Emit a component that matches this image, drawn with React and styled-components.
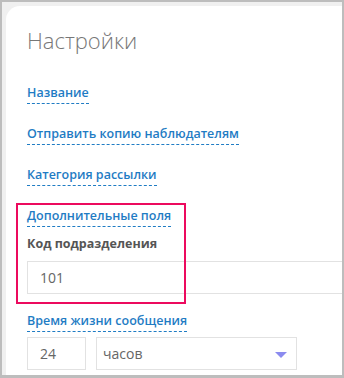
import styled, { createGlobalStyle } from 'styled-components';

const Global = createGlobalStyle`
  html, body {
    margin: 0;
    padding: 0;
    background: #bdbdbd;
  }
  body {
    font-family: 'Open Sans', 'Noto Sans', sans-serif;
  }
`;

const Frame = styled.div`
  margin: 2px 2px 0 2px;
  height: 373px;
  background: #f0f0f0;
  padding: 4px 0 0 4px;
  box-sizing: border-box;
  display: flex;
`;

const Panel = styled.div`
  position: relative;
  flex: 1;
  background: #fff;
  border-top-left-radius: 14px;
  padding: 18px 0 0 21px;
  overflow: hidden;
`;

const Title = styled.h1`
  margin: 0 0 29px;
  font-size: 22px;
  line-height: 32px;
  font-weight: 300;
  color: #777;
`;

const Section = styled.div`
  display: flex;
  flex-direction: column;
  align-items: flex-start;
  margin-bottom: ${(p) => p.$gap ?? 22}px;
`;

const Link = styled.a`
  display: block;
  font-size: 12.5px;
  line-height: 16px;
  font-weight: 600;
  color: #1f7cc4;
  text-decoration: none;
  border-bottom: 1px dashed #1f7cc4;
  padding-bottom: 2px;
  cursor: pointer;
`;

const Label = styled.div`
  font-size: 12.5px;
  line-height: 16px;
  font-weight: 700;
  color: #555;
  margin: 9px 0 9px;
`;

const Field = styled.div`
  height: 33px;
  box-sizing: border-box;
  border: 1px solid #e2e2e2;
  border-right: ${(p) => (p.$open ? 'none' : '1px solid #e2e2e2')};
  width: ${(p) => p.$w || 'auto'};
  align-self: stretch;
  display: flex;
  align-items: center;
  padding-left: ${(p) => p.$pad ?? 12}px;
  font-size: 14px;
  color: #666;
  position: relative;
`;

const Row = styled.div`
  display: flex;
  gap: 10px;
  margin-top: 5px;
`;

const Arrow = styled.span`
  position: absolute;
  right: 9px;
  top: 14px;
  width: 0;
  height: 0;
  border-left: 6px solid transparent;
  border-right: 6px solid transparent;
  border-top: 6px solid #8b8bef;
`;

const Highlight = styled.div`
  position: absolute;
  left: 10px;
  top: 197px;
  width: 166px;
  height: 97px;
  border: 2px solid #ec0a5e;
`;

export default function App() {
  return (
    <>
      <Global />
      <Frame>
        <Panel>
          <Title>Настройки</Title>
          <Section $gap={22}>
            <Link>Название</Link>
          </Section>
          <Section $gap={22}>
            <Link>Отправить копию наблюдателям</Link>
          </Section>
          <Section $gap={22}>
            <Link>Категория рассылки</Link>
          </Section>
          <Section $gap={19}>
            <Link>Дополнительные поля</Link>
            <Label>Код подразделения</Label>
            <Field $open>101</Field>
          </Section>
          <Section>
            <Link>Время жизни сообщения</Link>
            <Row>
              <Field $w="59px">24</Field>
              <Field $w="201px" $pad={6}>
                часов
                <Arrow />
              </Field>
            </Row>
          </Section>
          <Highlight />
        </Panel>
      </Frame>
    </>
  );
}
